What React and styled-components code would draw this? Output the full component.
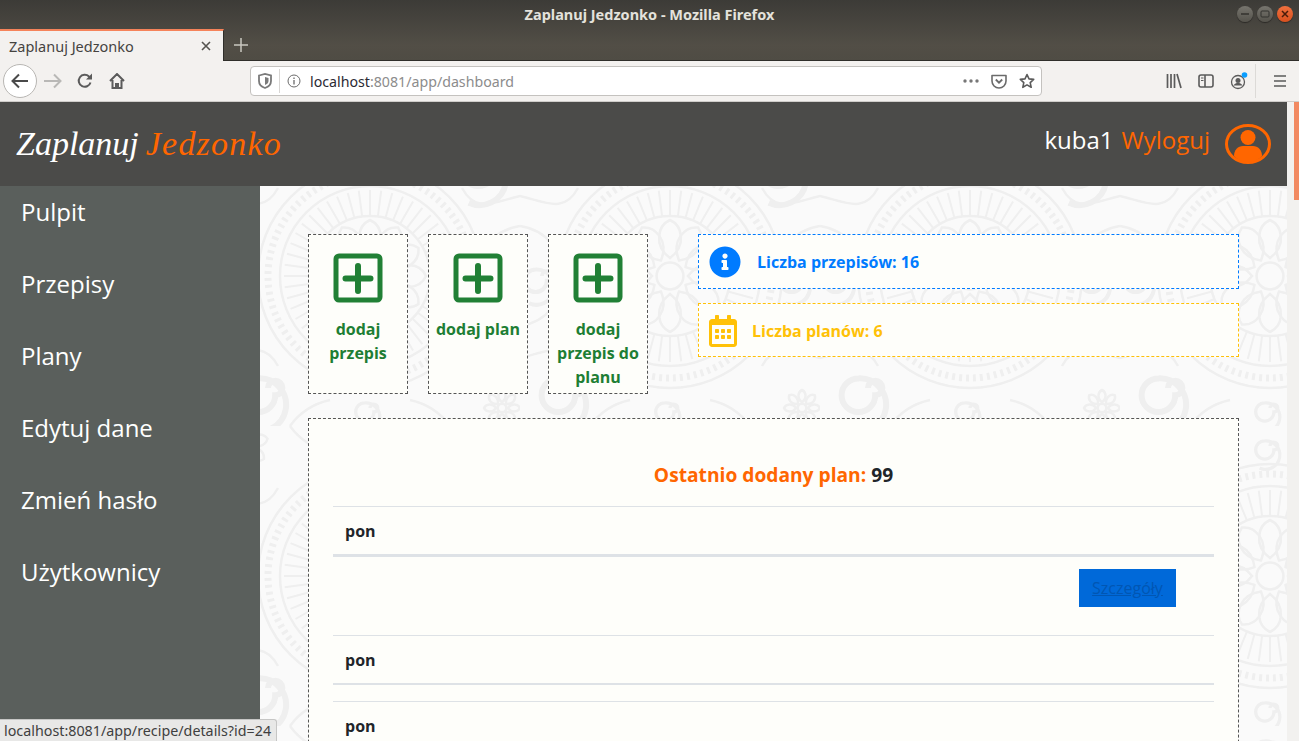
import React from 'react';
import styled, { createGlobalStyle } from 'styled-components';
import { FaInfoCircle, FaRegCalendarAlt } from 'react-icons/fa';

const GlobalStyle = createGlobalStyle`
	html, body {
		margin: 0;
		height: 100%;
		overflow: hidden;
		font-family: "Open Sans", "Noto Sans", sans-serif;
	}
	* {
		box-sizing: border-box;
	}
`;

const Window = styled.div`
	position: relative;
	width: 1299px;
	height: 741px;
	display: flex;
	flex-direction: column;
	overflow: hidden;
`;

const Chrome = styled.div`
	height: 61px;
	flex-shrink: 0;
	display: flex;
	flex-direction: column;
	background: linear-gradient(#3c3b37, #524e46 75%, #4f4c44);
	border-bottom: 1px solid #2f2e2a;
`;

const TitleBar = styled.div`
	height: 28px;
	display: flex;
	align-items: center;
	justify-content: center;
	position: relative;
	color: #e4e2dc;
	font: bold 14.5px "Noto Sans", sans-serif;
`;

const WindowButtons = styled.div`
	position: absolute;
	right: 6px;
	top: 6px;
	display: flex;
	gap: 4px;
`;

const WindowButton = styled.div`
	width: 16px;
	height: 16px;
	border-radius: 50%;
	background: ${props => (props.close ? 'linear-gradient(#f0703e, #d9501e)' : 'linear-gradient(#77756e, #55534c)')};
	box-shadow: 0 1px 1px rgba(0, 0, 0, 0.4);
	display: flex;
	align-items: center;
	justify-content: center;
`;

const TabBar = styled.div`
	flex: 1;
	display: flex;
	align-items: stretch;
	padding-top: 1px;
`;

const Tab = styled.div`
	width: 224px;
	margin-bottom: -1px;
	background: #f3f1ef;
	border-top: 2px solid #f5835a;
	border-right: 1px solid #2f2e2a;
	color: #45433f;
	font: 14.5px "Noto Sans", sans-serif;
	display: flex;
	align-items: center;
	justify-content: space-between;
	padding: 0 11px 0 9px;
	position: relative;
	z-index: 1;
`;

const NewTab = styled.div`
	width: 34px;
	display: flex;
	align-items: center;
	justify-content: center;
`;

const Toolbar = styled.div`
	height: 41px;
	flex-shrink: 0;
	background: #f3f1ef;
	border-bottom: 1px solid #cfcdca;
	display: flex;
	align-items: center;
	padding: 0 0 0 3px;
`;

const BackButton = styled.div`
	width: 34px;
	height: 34px;
	border-radius: 50%;
	background: #fff;
	border: 1px solid #b8b6b3;
	display: flex;
	align-items: center;
	justify-content: center;
`;

const ToolIcon = styled.div`
	width: 32px;
	height: 32px;
	display: flex;
	align-items: center;
	justify-content: center;
`;

const NavIcons = styled.div`
	display: flex;
	margin-right: 117px;
`;

const UrlBar = styled.div`
	width: 792px;
	height: 30px;
	background: #fff;
	border: 1px solid #c4c2bf;
	border-radius: 4px;
	display: flex;
	align-items: center;
	padding: 0 6px 0 7px;
	font: 14.2px "Noto Sans", sans-serif;
	color: #8c8c8c;
`;

const UrlDivider = styled.span`
	width: 1px;
	height: 24px;
	background: #d8d6d4;
	margin: 0 7px 0 7px;
`;

const UrlText = styled.span`
	flex: 1;
	margin-left: 9px;
	b {
		font-weight: 400;
		color: #2b2a33;
	}
`;

const UrlIcons = styled.div`
	display: flex;
	align-items: center;
	gap: 12px;
`;

const ToolRight = styled.div`
	display: flex;
	align-items: center;
	margin-left: 116px;
	position: relative;
`;

const ToolDivider = styled.span`
	width: 1px;
	height: 34px;
	background: #dcdad7;
	margin: 0 8px 0 1px;
`;

const Viewport = styled.div`
	flex: 1;
	min-height: 0;
	display: flex;
`;

const Page = styled.div`
	flex: 1;
	min-width: 0;
	display: flex;
	flex-direction: column;
`;

const ScrollBar = styled.div`
	width: 12px;
	background: #f2f1ef;
	display: flex;
	justify-content: flex-end;
`;

const ScrollThumb = styled.div`
	width: 5px;
	height: 98px;
	background: #f28a62;
`;

const Header = styled.header`
	height: 84px;
	flex-shrink: 0;
	background: #4b4b49;
	display: flex;
	align-items: center;
	justify-content: space-between;
	padding: 0 16px;
`;

const Logo = styled.div`
	font: italic 34px "Liberation Serif", serif;
	color: #fff;
	margin-top: -1px;
	span {
		color: #ff6600;
		margin-left: 7px;
		letter-spacing: 1.2px;
	}
`;

const UserBox = styled.div`
	display: flex;
	align-items: center;
	font-size: 24px;
	color: #fff;
`;

const UserText = styled.div`
	margin-top: -10px;
	margin-right: 15px;
`;

const Logout = styled.a`
	color: #ff6600;
	margin-left: 8px;
`;

const Body = styled.div`
	flex: 1;
	min-height: 0;
	display: flex;
`;

const Sidebar = styled.nav`
	width: 260px;
	flex-shrink: 0;
	background: #5a5f5c;
	display: flex;
	flex-direction: column;
`;

const SideLink = styled.a`
	height: 72px;
	flex-shrink: 0;
	padding: 8px 21px 0;
	line-height: 36px;
	font-size: 24px;
	color: #fff;
`;

const Main = styled.main`
	position: relative;
	flex: 1;
	min-width: 0;
	padding: 48px 48px 0;
	overflow: hidden;
	background: #fafafa;
`;

const Backdrop = styled.svg`
	position: absolute;
	inset: 0;
	width: 100%;
	height: 100%;
`;

const Content = styled.div`
	position: relative;
	display: flex;
	flex-direction: column;
	gap: 24px;
`;

const TopRow = styled.div`
	display: flex;
	gap: 20px;
`;

const ActionCard = styled.a`
	width: 100px;
	height: 160px;
	background: #fefefa;
	border: 1px dashed #555;
	padding: 18px 4px 0;
	display: flex;
	flex-direction: column;
	align-items: center;
	text-align: center;
	color: #1e7e34;
	font-size: 16px;
	font-weight: 700;
	line-height: 24px;
`;

const ActionIcon = styled.svg`
	width: 50px;
	height: 50px;
	margin-bottom: 14px;
	flex-shrink: 0;
`;

const Stats = styled.div`
	flex: 1;
	margin-left: 30px;
	display: flex;
	flex-direction: column;
	gap: 14px;
`;

const StatBox = styled.div`
	height: ${props => props.h}px;
	background: #fefefa;
	border: 1px dashed ${props => props.color};
	color: ${props => props.color};
	display: flex;
	align-items: center;
	gap: ${props => props.gap}px;
	padding: ${props => props.nudge}px 0 0 ${props => props.pad}px;
	font-size: 16px;
	font-weight: 700;
`;

const Panel = styled.section`
	background: #fefefa;
	border: 1px dashed #555;
	padding: 41px 24px 0;
	height: 400px;
`;

const PanelTitle = styled.h2`
	margin: 0 0 16px;
	text-align: center;
	font-size: 19.2px;
	line-height: 30px;
	font-weight: 700;
	color: #212529;
	span {
		color: #ff6600;
	}
`;

const HeadRow = styled.div`
	height: ${props => props.h}px;
	border-top: 1px solid #dee2e6;
	border-bottom: ${props => props.thick}px solid #dee2e6;
	padding-left: 12px;
	display: flex;
	align-items: center;
	font-size: 16px;
	font-weight: 700;
	color: #212529;
`;

const BodyRow = styled.div`
	height: ${props => props.h}px;
	display: flex;
	justify-content: flex-end;
	padding: 12px 38px 0 0;
`;

const DetailsButton = styled.a`
	width: 97px;
	height: 38px;
	background: #0069d9;
	color: #0056b3;
	text-decoration: underline;
	font-size: 16px;
	display: flex;
	align-items: center;
	justify-content: center;
`;

const StatusTip = styled.div`
	position: absolute;
	left: 0;
	bottom: 0;
	height: 22px;
	width: 277px;
	background: #e8e8e7;
	border: 1px solid #c6c6c5;
	border-left: 0;
	border-bottom: 0;
	border-top-right-radius: 3px;
	color: #3f3f3f;
	font: 14.3px "Noto Sans", sans-serif;
	line-height: 21px;
	padding-left: 4px;
	white-space: nowrap;
`;

const menu = ['Pulpit', 'Przepisy', 'Plany', 'Edytuj dane', 'Zmień hasło', 'Użytkownicy'];
const actions = ['dodaj przepis', 'dodaj plan', 'dodaj przepis do planu'];

const PlusSquare = () => (
	<ActionIcon viewBox="0 0 50 50">
		<rect x="3" y="3" width="44" height="44" rx="3" fill="none" stroke="#218035" strokeWidth="5" />
		<path d="M25 13v25M12.500 25.500h25" stroke="#218035" strokeWidth="6" strokeLinecap="round" />
	</ActionIcon>
);

const UserIcon = () => (
	<svg width="46" height="40" viewBox="0 0 46 40">
		<ellipse cx="23" cy="20" rx="21.500" ry="18.500" fill="none" stroke="#ff6600" strokeWidth="3" />
		<circle cx="23" cy="13.500" r="7.500" fill="#ff6600" />
		<path d="M9 32c0-6 4-10 9-10h10c5 0 9 4 9 10-4 4-9 6.500-14 6.500S13 36 9 32z" fill="#ff6600" />
	</svg>
);

const angles = n => Array.from({ length: n }, (_, i) => (i * 360) / n);

const Flower = ({ x, y, r, petals }) => (
	<g transform={`translate(${x} ${y})`}>
		<circle r={r * 0.24} />
		{angles(petals).map(a => (
			<path
				key={a}
				transform={`rotate(${a})`}
				d={`M0 ${-r * 0.32}C${r * 0.3} ${-r * 0.55} ${r * 0.22} ${-r * 0.9} 0 ${-r}C${-r * 0.22} ${-r * 0.9} ${-r * 0.3} ${-r * 0.55} 0 ${-r * 0.32}z`}
			/>
		))}
	</g>
);

const Spiral = ({ x, y, s }) => (
	<path
		transform={`translate(${x} ${y}) scale(${s})`}
		d="M0 0a3 3 0 1 1 3 3 7 7 0 1 1 -7 -7 11 11 0 1 1 -4 21"
	/>
);

// rough lace wallpaper, same tile repeated behind the whole content area
const Paisley = () => (
	<Backdrop>
		<defs>
			<pattern id="lace" width="300" height="300" patternUnits="userSpaceOnUse" patternTransform="translate(-40 -60)">
				<g fill="none" stroke="#efefef" strokeWidth="2.500">
					<circle cx="150" cy="150" r="112" />
					<circle cx="150" cy="150" r="102" strokeDasharray="3 4" strokeWidth="7" />
					<circle cx="150" cy="150" r="90" />
					{angles(48).map(a => (
						<path key={a} transform={`rotate(${a} 150 150)`} d="M150 64v26" strokeWidth="2" />
					))}
					<circle cx="150" cy="150" r="60" />
					<Flower x={150} y={150} r={56} petals={12} />
					<Flower x={18} y={18} r={30} petals={9} />
					<Flower x={282} y={282} r={18} petals={8} />
					<Spiral x={22} y={150} s={1.6} />
					<Spiral x={278} y={150} s={1.6} />
					<Spiral x={150} y={20} s={1.300} />
					<Spiral x={150} y={282} s={1.300} />
					<Spiral x={48} y={262} s={2.400} />
					<Spiral x={268} y={36} s={2.400} />
					<path d="M0 70c26 6 44 18 58-8M300 70c-26 6-44 18-58-8M0 232c26-6 44-18 58 8M300 232c-26-6-44-18-58 8" />
					<path d="M70 0c10 14 22 22 40 26M230 0c-10 14-22 22-40 26M70 300c10-14 22-22 40-26M230 300c-10-14-22-22-40-26" />
					<path d="M0 100c14 2 24 8 32 18M0 200c14-2 24-8 32-18M300 100c-14 2-24 8-32 18M300 200c-14-2-24-8-32-18" />
				</g>
			</pattern>
		</defs>
		<rect width="100%" height="100%" fill="url(#lace)" />
	</Backdrop>
);

export default function App() {
	return (
		<Window>
			<GlobalStyle />
			<Chrome>
				<TitleBar>
					Zaplanuj Jedzonko - Mozilla Firefox
					<WindowButtons>
						<WindowButton>
							<svg width="10" height="10"><path d="M1 5h8" stroke="#33322e" strokeWidth="1.500" /></svg>
						</WindowButton>
						<WindowButton>
							<svg width="10" height="10"><rect x="1" y="2" width="8" height="6" rx="1" fill="none" stroke="#33322e" /></svg>
						</WindowButton>
						<WindowButton close>
							<svg width="10" height="10"><path d="M2 2l6 6M8 2l-6 6" stroke="#4a1c0a" strokeWidth="1.500" /></svg>
						</WindowButton>
					</WindowButtons>
				</TitleBar>
				<TabBar>
					<Tab>
						Zaplanuj Jedzonko
						<svg width="12" height="12"><path d="M2 2l8 8M10 2l-8 8" stroke="#55534f" strokeWidth="1.600" /></svg>
					</Tab>
					<NewTab>
						<svg width="14" height="14"><path d="M7 0v14M0 7h14" stroke="#c9c7c0" strokeWidth="1.500" /></svg>
					</NewTab>
				</TabBar>
			</Chrome>
			<Toolbar>
				<BackButton>
					<svg width="18" height="16" viewBox="0 0 18 16">
						<path d="M1.500 8h15.500M8 1.500L1.500 8 8 14.500" fill="none" stroke="#4a4a4a" strokeWidth="2" />
					</svg>
				</BackButton>
				<NavIcons>
					<ToolIcon>
						<svg width="18" height="16" viewBox="0 0 18 16">
							<path d="M0 8h15.500M10 1.500L16.500 8 10 14.500" fill="none" stroke="#b9b8b6" strokeWidth="2" />
						</svg>
					</ToolIcon>
					<ToolIcon>
						<svg width="16" height="16" viewBox="0 0 16 16">
							<path d="M13.500 9.500A6 6 0 1 1 12 3.500L14 5" fill="none" stroke="#5b5b5b" strokeWidth="2" />
							<path d="M15 0.500v6h-6z" fill="#5b5b5b" />
						</svg>
					</ToolIcon>
					<ToolIcon>
						<svg width="16" height="16" viewBox="0 0 16 16">
							<path d="M1 8l7-7 7 7M3.500 7v8h3.500v-4h2v4h3.500V7" fill="none" stroke="#5b5b5b" strokeWidth="2" />
						</svg>
					</ToolIcon>
				</NavIcons>
				<UrlBar>
					<svg width="14" height="16" viewBox="0 0 14 16">
						<path d="M1 2.500L7 1l6 1.500V8c0 3.500-3 6-6 7-3-1-6-3.500-6-7z" fill="none" stroke="#7a7a7a" strokeWidth="1.800" />
						<path d="M7 4l3.500 1v3c0 2-1.500 3.200-3.500 4z" fill="#7a7a7a" />
					</svg>
					<UrlDivider />
					<svg width="14" height="14" viewBox="0 0 14 14">
						<circle cx="7" cy="7" r="6" fill="none" stroke="#6b6b6b" />
						<path d="M7 6v4.500M7 3.500v1.500" stroke="#6b6b6b" strokeWidth="1.300" />
					</svg>
					<UrlText><b>localhost</b>:8081/app/dashboard</UrlText>
					<UrlIcons>
						<svg width="16" height="4"><circle cx="2" cy="2" r="1.700" fill="#777" /><circle cx="8" cy="2" r="1.700" fill="#777" /><circle cx="14" cy="2" r="1.700" fill="#777" /></svg>
						<svg width="16" height="16" viewBox="0 0 16 16">
							<path d="M1 2.500h14V8a7 7 0 0 1-14 0z" fill="none" stroke="#6b6b6b" strokeWidth="1.600" strokeLinejoin="round" />
							<path d="M4.800 6.500L8 9.700l3.200-3.200" fill="none" stroke="#6b6b6b" strokeWidth="1.800" />
						</svg>
						<svg width="16" height="16" viewBox="0 0 16 16">
							<path d="M8 1.500l2 4.400 4.700.5-3.500 3.200 1 4.700L8 11.900l-4.200 2.400 1-4.700L1.300 6.400 6 5.900z" fill="none" stroke="#5b5b5b" strokeWidth="1.600" strokeLinejoin="round" />
						</svg>
					</UrlIcons>
				</UrlBar>
				<ToolRight>
					<ToolIcon>
						<svg width="16" height="16" viewBox="0 0 16 16">
							<path d="M1.500 1v14M5 1v14M8.500 1v14M11 1l4 14" stroke="#5b5b5b" strokeWidth="1.700" />
						</svg>
					</ToolIcon>
					<ToolIcon>
						<svg width="16" height="14" viewBox="0 0 16 14">
							<rect x="1" y="1" width="14" height="12" rx="2" fill="none" stroke="#5b5b5b" strokeWidth="1.600" />
							<path d="M7 1v12" stroke="#5b5b5b" strokeWidth="1.600" />
							<path d="M3 4h2.500M3 6.500h2.500" stroke="#5b5b5b" />
						</svg>
					</ToolIcon>
					<ToolIcon>
						<svg width="20" height="20" viewBox="0 0 20 20">
							<circle cx="10" cy="11" r="6.500" fill="none" stroke="#5b5b5b" strokeWidth="1.300" />
							<circle cx="10" cy="9.500" r="2.500" fill="#5b5b5b" />
							<path d="M5.500 14.500c1-2 3-2.500 4.500-2.500s3.500.5 4.500 2.500" fill="#5b5b5b" />
							<circle cx="16.500" cy="4" r="2.800" fill="#0a9dff" />
						</svg>
					</ToolIcon>
					<ToolDivider />
					<ToolIcon>
						<svg width="14" height="12"><path d="M1 1h12M1 6h12M1 11h12" stroke="#5b5b5b" strokeWidth="1.700" /></svg>
					</ToolIcon>
				</ToolRight>
			</Toolbar>
			<Viewport>
				<Page>
					<Header>
						<Logo>Zaplanuj<span>Jedzonko</span></Logo>
						<UserBox>
							<UserText>
								kuba1
								<Logout>Wyloguj</Logout>
							</UserText>
							<UserIcon />
						</UserBox>
					</Header>
					<Body>
						<Sidebar>
							{menu.map(item => (
								<SideLink key={item}>{item}</SideLink>
							))}
						</Sidebar>
						<Main>
							<Paisley />
							<Content>
								<TopRow>
									{actions.map(action => (
										<ActionCard key={action}>
											<PlusSquare />
											{action}
										</ActionCard>
									))}
									<Stats>
										<StatBox h={55} pad={10} gap={16} nudge={0} color="#007bff">
											<FaInfoCircle size={32} />
											Liczba przepisów: 16
										</StatBox>
										<StatBox h={54} pad={8} gap={13} nudge={1} color="#ffc107">
											<FaRegCalendarAlt size={32} />
											Liczba planów: 6
										</StatBox>
									</Stats>
								</TopRow>
								<Panel>
									<PanelTitle><span>Ostatnio dodany plan:</span> 99</PanelTitle>
									<HeadRow h={51} thick={3}>pon</HeadRow>
									<BodyRow h={78}>
										<DetailsButton>Szczegóły</DetailsButton>
									</BodyRow>
									<HeadRow h={50} thick={2}>pon</HeadRow>
									<BodyRow h={16} />
									<HeadRow h={50} thick={2}>pon</HeadRow>
								</Panel>
							</Content>
						</Main>
					</Body>
				</Page>
				<ScrollBar>
					<ScrollThumb />
				</ScrollBar>
			</Viewport>
			<StatusTip>localhost:8081/app/recipe/details?id=24</StatusTip>
		</Window>
	);
}
